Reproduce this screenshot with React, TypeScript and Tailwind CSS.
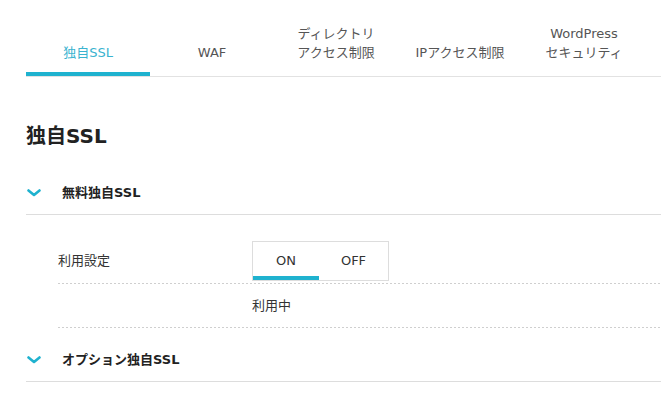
const tabs = [
  { label: ['独自SSL'], active: true },
  { label: ['WAF'] },
  { label: ['ディレクトリ', 'アクセス制限'] },
  { label: ['IPアクセス制限'] },
  { label: ['WordPress', 'セキュリティ'] },
];

const Chevron = () => (
  <svg width="14" height="8" viewBox="0 0 14 8" className="text-[#1fb2cf]">
    <path d="M1.5 1.5 L7 6 L12.5 1.5" fill="none" stroke="currentColor" strokeWidth="2.6" strokeLinecap="round" strokeLinejoin="round" />
  </svg>
);

const Dotted = () => (
  <div className="h-px bg-[repeating-linear-gradient(to_right,#cfcfcf_0_2px,transparent_2px_4px)]" />
);

const SectionHeader = ({ title }: { title: string }) => (
  <div className="flex h-[44px] items-center border-b border-[#dddddd]">
    <div className="flex w-[36px] pl-px">
      <Chevron />
    </div>
    <span className="text-[13px] font-bold text-[#222]">{title}</span>
  </div>
);

export default function App() {
  return (
    <div className="h-[417px] w-[661px] overflow-hidden bg-white pl-[26px] font-['DejaVu_Sans','Noto_Sans_CJK_JP',sans-serif] text-[#333]">
      {/* tabs */}
      <div className="flex h-[77px] border-b border-[#e2e2e2]">
        {tabs.map((t, i) => (
          <div
            key={i}
            className={`flex w-[124px] items-end justify-center border-b-4 pb-[10px] text-center text-[13px] leading-[19px] ${
              t.active ? 'border-[#1fb2cf] text-[#3ab3cf]' : 'border-transparent text-[#555]'
            }`}
          >
            <div>
              {t.label.map((l) => (
                <div key={l}>{l}</div>
              ))}
            </div>
          </div>
        ))}
      </div>

      <h1 className="mt-[45px] text-[20px] font-bold leading-[28px] text-[#222]">独自SSL</h1>

      <div className="mt-[21px]">
        <SectionHeader title="無料独自SSL" />
        <div className="pb-[10px] pl-[32px] text-[13px]">
          <div className="flex items-center pb-[2px] pt-[26px]">
            <div className="w-[194px]">利用設定</div>
            <div className="flex h-[40px] w-[137px] border border-[#dddddd]">
              <div className="flex w-[66px] items-center justify-center border-b-4 border-[#1fb2cf] pt-[3px] text-[#333]">ON</div>
              <div className="flex flex-1 items-center justify-center pb-px text-[#333]">OFF</div>
            </div>
          </div>
          <Dotted />
          <div className="flex h-[43px] items-center">
            <div className="w-[194px]" />
            <div>利用中</div>
          </div>
          <Dotted />
        </div>
        <SectionHeader title="オプション独自SSL" />
      </div>
    </div>
  );
}
